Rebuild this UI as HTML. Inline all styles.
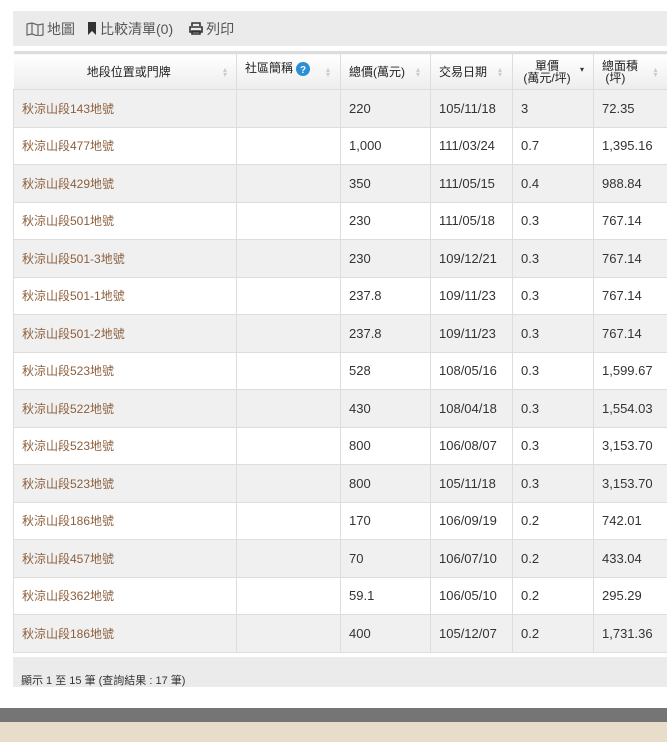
<!DOCTYPE html>
<html><head><meta charset="utf-8">
<style>
*{margin:0;padding:0;box-sizing:border-box}
body{width:667px;height:742px;background:#fff;font-family:"Liberation Sans","Noto Sans CJK TC",sans-serif;color:#333;position:relative;overflow:hidden}
.tb{position:absolute;left:13px;top:11px;width:654px;height:35px;background:#ebebeb;font-size:14px;color:#555;display:flex;align-items:center;padding-left:13px}
.tb span{display:inline-flex;align-items:center;margin-right:12px}
.tb svg{margin-right:3px}
table{position:absolute;left:13px;top:51px;width:654px;border-collapse:collapse;table-layout:fixed;font-size:13px;border-top:3px solid #ddd}
th{height:37px;background:linear-gradient(#fff,#ededed);font-weight:normal;font-size:12px;color:#222;border-left:1px solid #ddd;position:relative;text-align:left;padding-left:8px;line-height:12px}
th .s{position:absolute;right:8px;top:50%;margin-top:-5px;width:6px;font-size:8px;color:#ccc;line-height:5px}
td{height:37.5px;border:1px solid #ddd;padding-left:8px;color:#333}
tr:nth-child(even) td{background:#f0f0f0}
td:first-child{color:#8b5e3c;font-size:12px}
.ft{position:absolute;left:13px;top:657px;width:654px;height:30px;background:#ebebeb;font-size:11px;padding:15px 0 0 8px;color:#333}
.d{position:absolute;left:0;top:708px;width:667px;height:14px;background:#757575}
.b{position:absolute;left:0;top:722px;width:667px;height:20px;background:#e8dccb}
</style></head><body>
<div class="tb">
<span><svg width="18" height="14" viewBox="0 0 18 14" fill="none" stroke="#666" stroke-width="1.2"><path d="M1 2l5-1 6 2 5-1v11l-5 1-6-2-5 1z M6 1v11 M12 3v11"/></svg>地圖</span>
<span><svg width="10" height="13" viewBox="0 0 10 13"><path d="M1 0h8v13L5 9 1 13z" fill="#333"/></svg>比較清單(0)</span>
<span style="margin-left:4px"><svg width="14" height="13" viewBox="0 0 14 13" fill="none" stroke="#333" stroke-width="1.6"><path d="M3 4V1h8v3 M1 5h12v5H1z M3 9h8v3H3z"/></svg>列印</span>
</div>
<table>
<colgroup><col style="width:223px"><col style="width:104px"><col style="width:90px"><col style="width:82px"><col style="width:81px"><col style="width:74px"></colgroup>
<tr>
<th style="text-align:center;border-left:none">地段位置或門牌<span class="s">▴<br>▾</span></th>
<th style="vertical-align:top;padding-top:8px">社區簡稱 <svg width="14" height="14" viewBox="0 0 14 14" style="vertical-align:middle"><circle cx="7" cy="7" r="7" fill="#2a8fd6"/><text x="7" y="11" font-size="10" fill="#fff" text-anchor="middle" font-weight="bold" font-family="Liberation Sans">?</text></svg><span class="s">▴<br>▾</span></th>
<th>總價(萬元)<span class="s">▴<br>▾</span></th>
<th>交易日期<span class="s">▴<br>▾</span></th>
<th style="text-align:center;padding:0 12px 0 0">單價<br>(萬元/坪)<span class="s" style="color:#333">▾</span></th>
<th style="text-align:left;padding-left:8px">總面積<br>&nbsp;(坪)<span class="s">▴<br>▾</span></th>
</tr>
<tr><td>秋涼山段143地號</td><td></td><td>220</td><td>105/11/18</td><td>3</td><td>72.35</td></tr>
<tr><td>秋涼山段477地號</td><td></td><td>1,000</td><td>111/03/24</td><td>0.7</td><td>1,395.16</td></tr>
<tr><td>秋涼山段429地號</td><td></td><td>350</td><td>111/05/15</td><td>0.4</td><td>988.84</td></tr>
<tr><td>秋涼山段501地號</td><td></td><td>230</td><td>111/05/18</td><td>0.3</td><td>767.14</td></tr>
<tr><td>秋涼山段501-3地號</td><td></td><td>230</td><td>109/12/21</td><td>0.3</td><td>767.14</td></tr>
<tr><td>秋涼山段501-1地號</td><td></td><td>237.8</td><td>109/11/23</td><td>0.3</td><td>767.14</td></tr>
<tr><td>秋涼山段501-2地號</td><td></td><td>237.8</td><td>109/11/23</td><td>0.3</td><td>767.14</td></tr>
<tr><td>秋涼山段523地號</td><td></td><td>528</td><td>108/05/16</td><td>0.3</td><td>1,599.67</td></tr>
<tr><td>秋涼山段522地號</td><td></td><td>430</td><td>108/04/18</td><td>0.3</td><td>1,554.03</td></tr>
<tr><td>秋涼山段523地號</td><td></td><td>800</td><td>106/08/07</td><td>0.3</td><td>3,153.70</td></tr>
<tr><td>秋涼山段523地號</td><td></td><td>800</td><td>105/11/18</td><td>0.3</td><td>3,153.70</td></tr>
<tr><td>秋涼山段186地號</td><td></td><td>170</td><td>106/09/19</td><td>0.2</td><td>742.01</td></tr>
<tr><td>秋涼山段457地號</td><td></td><td>70</td><td>106/07/10</td><td>0.2</td><td>433.04</td></tr>
<tr><td>秋涼山段362地號</td><td></td><td>59.1</td><td>106/05/10</td><td>0.2</td><td>295.29</td></tr>
<tr><td>秋涼山段186地號</td><td></td><td>400</td><td>105/12/07</td><td>0.2</td><td>1,731.36</td></tr>
</table>
<div class="ft">顯示 1 至 15 筆 (查詢結果 : 17 筆)</div>
<div class="d"></div><div class="b"></div>
</body></html>
